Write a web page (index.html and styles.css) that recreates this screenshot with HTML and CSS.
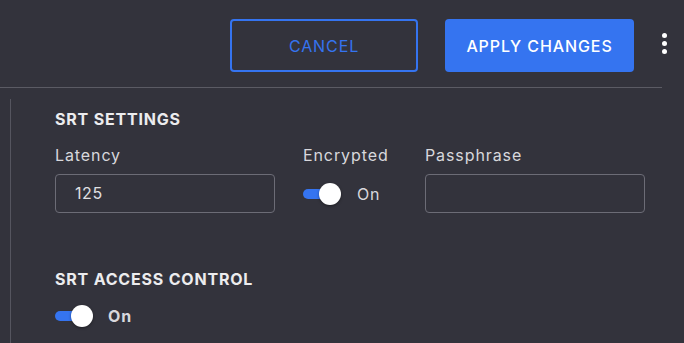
FILE: index.html
```html
<!DOCTYPE html>
<html>
<head>
<meta charset="utf-8">
<link rel="stylesheet" href="styles.css">
</head>
<body>
<div class="header">
  <button class="btn btn-outline">CANCEL</button>
  <button class="btn btn-primary">APPLY CHANGES</button>
  <div class="kebab"><span></span><span></span><span></span></div>
</div>
<div class="divider"></div>
<div class="panel">
  <h2 class="section-title">SRT SETTINGS</h2>
  <div class="fields">
    <div class="field">
      <label class="label">Latency</label>
      <div class="input">125</div>
    </div>
    <div class="field">
      <label class="label">Encrypted</label>
      <div class="toggle-row">
        <div class="toggle"><div class="track"></div><div class="knob"></div></div>
        <span class="toggle-text">On</span>
      </div>
    </div>
    <div class="field">
      <label class="label">Passphrase</label>
      <div class="input"></div>
    </div>
  </div>
  <h2 class="section-title second">SRT ACCESS CONTROL</h2>
  <div class="toggle-row access">
    <div class="toggle"><div class="track"></div><div class="knob"></div></div>
    <span class="toggle-text bold">On</span>
  </div>
</div>
</body>
</html>
```
FILE: styles.css
```css
html, body {
  margin: 0;
  padding: 0;
  background: #33333c;
  font-family: Inter, "Noto Sans", sans-serif;
  color: #dcdcdf;
  overflow: hidden;
  height: 343px;
}
.header {
  display: flex;
  justify-content: flex-end;
  align-items: center;
  padding-top: 19px;
  height: 53px;
}
.btn {
  height: 53px;
  font-family: Inter, sans-serif;
  font-size: 16px;
  border-radius: 4px;
  cursor: pointer;
  box-sizing: border-box;
  letter-spacing: 0.9px;
}
.btn-outline {
  width: 188px;
  background: transparent;
  border: 2px solid #3574f0;
  color: #3574f0;
  font-weight: 400;
  margin-right: 27px;
}
.btn-primary {
  width: 189px;
  background: #3574f0;
  border: none;
  color: #ffffff;
  font-weight: 500;
}
.kebab {
  width: 50px;
  box-sizing: border-box;
  padding-left: 10px;
  display: flex;
  flex-direction: column;
  align-items: center;
  gap: 3px;
  margin-top: -5px;
}
.kebab span {
  width: 5px;
  height: 5px;
  border-radius: 50%;
  background: #ffffff;
}
.divider {
  margin-top: 15px;
  height: 1px;
  background: #5b5b64;
  margin-right: 22px;
}
.panel {
  margin-left: 10px;
  margin-top: 11px;
  border-left: 1px solid #55555f;
  padding-left: 44px;
  padding-top: 10px;
  box-sizing: border-box;
  height: 244px;
}
.section-title {
  margin: 0;
  font-size: 16px;
  font-weight: 700;
  line-height: 20px;
  color: #ececee;
  letter-spacing: 0.8px;
}
.section-title.second {
  margin-top: 56px;
}
.fields {
  display: grid;
  grid-template-columns: 220px 94px 220px;
  column-gap: 28px;
  margin-top: 16px;
}
.field {
  display: flex;
  flex-direction: column;
}
.label {
  font-size: 16px;
  line-height: 20px;
  color: #d8d8dc;
  margin-bottom: 9px;
  letter-spacing: 0.9px;
  white-space: nowrap;
}
.input {
  height: 39px;
  box-sizing: border-box;
  border: 1px solid #6c6c76;
  border-radius: 4px;
  padding-left: 19px;
  font-size: 16px;
  line-height: 37px;
  color: #e0e0e3;
  letter-spacing: 0.6px;
}
.toggle-row {
  display: flex;
  align-items: center;
  height: 39px;
}
.toggle {
  position: relative;
  width: 38px;
  height: 22px;
}
.track {
  position: absolute;
  left: 0;
  top: 6px;
  width: 34px;
  height: 10px;
  border-radius: 5px;
  background: #3574f0;
}
.knob {
  position: absolute;
  right: 0;
  top: 0;
  width: 22px;
  height: 22px;
  border-radius: 50%;
  background: #ffffff;
  box-shadow: 0 1px 3px rgba(0,0,0,0.4);
}
.toggle-text {
  margin-left: 16px;
  font-size: 16px;
  color: #d8d8dc;
  letter-spacing: 0.8px;
}
.toggle-text.bold {
  font-weight: 700;
  margin-left: 15px;
}
.access {
  margin-top: 9px;
  height: 36px;
}
```
